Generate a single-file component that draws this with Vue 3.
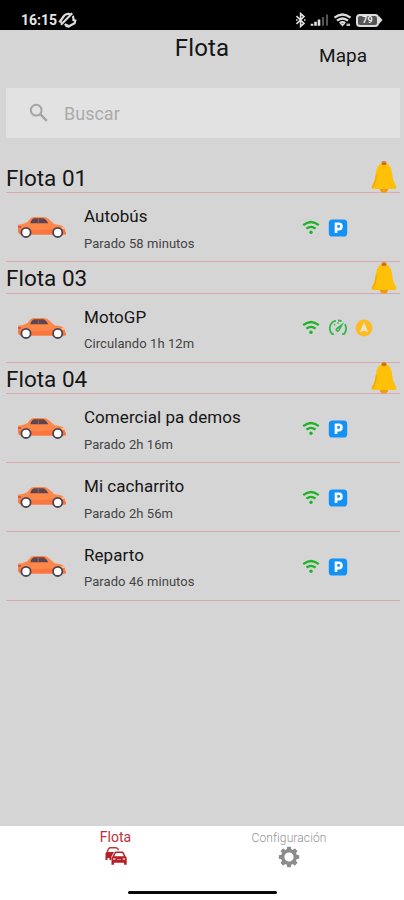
<script setup>
const groups = [
  { name: 'Flota 01', items: [{ name: 'Autobús', status: 'Parado 58 minutos', moving: false }] },
  { name: 'Flota 03', items: [{ name: 'MotoGP', status: 'Circulando 1h 12m', moving: true }] },
  {
    name: 'Flota 04',
    items: [
      { name: 'Comercial pa demos', status: 'Parado 2h 16m', moving: false },
      { name: 'Mi cacharrito', status: 'Parado 2h 56m', moving: false },
      { name: 'Reparto', status: 'Parado 46 minutos', moving: false },
    ],
  },
]
</script>

<template>
  <div class="screen">
    <div class="status">
      <span class="clock">16:15</span>
      <svg class="mute" width="19" height="16" viewBox="0 0 19 16">
        <path d="M2 9.5 6.2 3.5Q9.5 .8 13.2 2.6Q16 4.3 15.4 8L17.3 8.6 16.6 11.2 11 14.2 5.5 11.6Z" fill="none" stroke="#ddd" stroke-width="2.2" />
        <path d="M7.5 13.8 11.5 14.6" stroke="#ddd" stroke-width="2.4" />
        <path d="M3 13.6 14.5 2" stroke="#000" stroke-width="3" />
        <path d="M3 12.8 14.2 1.2" stroke="#ddd" stroke-width="2" />
      </svg>
      <div class="indicators">
        <svg width="12" height="16" viewBox="0 0 12 16"><path d="M1.5 4.2 9 11.4 5.6 14.4V1.6L9 4.6 1.5 11.8M1 8h1.5M9 8h1.5" fill="none" stroke="#e2e2e2" stroke-width="1.6" /></svg>
        <svg width="20" height="16" viewBox="0 0 20 16">
          <path d="M2 13.8v-2M5.5 13.8v-4M9 13.8V7.5" stroke="#e2e2e2" stroke-width="2.6" />
          <path d="M13 13.8V5M17 13.8V2.5" stroke="#555" stroke-width="2" />
        </svg>
        <svg width="20" height="16" viewBox="0 0 20 16">
          <path d="M1.5 5.6Q9.5-.8 17.5 5.6M4 8.6Q9.5 4.2 15 8.6M6.8 11.4Q9.5 9.2 12.2 11.4" fill="none" stroke="#ddd" stroke-width="2.4" />
          <path d="M7.3 12h4.4L9.5 14.6Z" fill="#ddd" />
          <path d="M13.5 12.8h3.6" stroke="#bbb" stroke-width="2.4" />
        </svg>
        <span class="battery">
          <span class="level">79</span>
          <svg width="4" height="8" viewBox="0 0 4 8"><path d="M0 0 3.5 4 0 8Z" fill="#ddd" /></svg>
        </span>
      </div>
    </div>

    <header class="top">
      <span></span>
      <h1>Flota</h1>
      <span class="map">Mapa</span>
    </header>

    <div class="search">
      <svg width="20" height="20" viewBox="0 0 20 20"><circle cx="7.2" cy="7.2" r="5.4" fill="none" stroke="#a4a4a4" stroke-width="2" /><path d="m11.2 11.2 6.6 6.6" stroke="#a4a4a4" stroke-width="2.4" /></svg>
      <span>Buscar</span>
    </div>

    <main class="list">
      <section v-for="group in groups" :key="group.name">
        <div class="group">
          <h2>{{ group.name }}</h2>
          <svg class="bell" width="26" height="34" viewBox="0 0 26 34">
            <circle cx="13" cy="3.8" r="2.7" fill="#d9822b" />
            <path d="M8.7 28.5h8.6a4.3 4.3 0 0 1-8.6 0Z" fill="#f29a12" />
            <path d="M13 3C17.2 3 20 6.2 20.8 11.5C21.8 19 22.6 22 25 25.4Q26.2 28 24.4 29H1.6Q-.2 28 1 25.4C3.4 22 4.2 19 5.2 11.5C6 6.2 8.8 3 13 3Z" fill="#ffc107" />
            <path d="M5.6 14C5 20 4 23.5 1.6 27.7" fill="none" stroke="#f5a80c" stroke-width="1.5" />
            <path d="M11.2 4.5Q13 2.5 14.8 4.5" fill="none" stroke="#c9651d" stroke-width="2" />
          </svg>
        </div>
        <div v-for="item in group.items" :key="item.name" class="row">
          <svg class="car" width="50" height="23" viewBox="0 0 50 23">
            <path d="M1 8.8Q10 8 12.6 3.5Q13.8 1 16.5 1H27Q30 1 32.3 3.5L37.5 8.3Q46 8.8 47.5 12V14.8L49 16.2V18.2Q47.5 19 43.5 18.8H5Q1.7 18.6 1 16.2Z" fill="#fd8748" />
            <path d="M1.2 13.5 20 14.2 47.8 12.4V15L49 16.2V18.3H4Q1.5 18 1.2 13.5Z" fill="#fa7640" />
            <path d="M13.2 7.2Q15 2.3 17.4 2.3H26Q28.5 2.3 31.3 7.2Z" fill="#5c4553" />
            <path d="M20.8 2.3h1.1v5h-1.1z" fill="#93604f" />
            <path d="M1 10h3v2H1z" fill="#d9534a" />
            <path d="M44.5 11h3.3v2h-3.3z" fill="#ffc08d" />
            <g fill="#fff" stroke="#4a4555" stroke-width="1.8">
              <circle cx="9" cy="16.4" r="4.6" />
              <circle cx="40.7" cy="16.4" r="4.6" />
            </g>
          </svg>
          <div class="info">
            <span class="name">{{ item.name }}</span>
            <span class="sub">{{ item.status }}</span>
          </div>
          <div class="badges">
            <svg width="18" height="18" viewBox="0 0 18 18">
              <path d="M1.2 6.2Q9-.2 16.8 6.2M4.4 9.7Q9 6 13.6 9.7" fill="none" stroke="#1fb428" stroke-width="2.3" />
              <circle cx="9" cy="13.3" r="1.7" fill="#1fb428" />
            </svg>
            <svg v-if="!item.moving" width="20" height="18" viewBox="0 0 20 18">
              <rect x=".8" y=".5" width="18.4" height="17" rx="3.6" fill="#1292f5" />
              <path d="M8 14V4.8h2.8a2.6 2.6 0 0 1 0 5.3H8" fill="none" stroke="#fff" stroke-width="2.6" />
            </svg>
            <template v-else>
              <svg width="20" height="18" viewBox="0 0 20 18">
                <path d="M6 15.2H4.2Q1.6 12.8 1.8 9Q2.5 2.8 8 1.7M10 1.5Q12 1.5 13.6 2.3M16.9 5.2Q19.8 10.5 16 15.2H14" fill="none" stroke="#34b848" stroke-width="1.8" />
                <path d="M6 5l1.2 1.3M10 3v2" stroke="#34b848" stroke-width="1.1" />
                <path d="M16.2 3.2 11.7 11.5A2.2 2.2 0 1 1 8.5 8.8Z" fill="#34b848" />
                <circle cx="10" cy="10.5" r=".8" fill="#d5d5d5" />
              </svg>
              <svg class="arrow" width="18" height="18" viewBox="0 0 18 18">
                <circle cx="9" cy="9" r="8.4" fill="#fdbc24" />
                <path d="M9 3.2 13.2 13.2 9 11.4 4.8 13.2Z" fill="#eee5c8" />
              </svg>
            </template>
          </div>
        </div>
      </section>
    </main>

    <nav class="tabs">
      <div class="tab active">
        <span>Flota</span>
        <svg width="24" height="21" viewBox="0 0 24 21">
          <path d="M3 7Q4.2 2 6 1.7H12Q14 1.9 14.6 4.3" fill="none" stroke="#c5333a" stroke-width="1.5" />
          <path d="M1.5 7Q2.2 6 4 6H10L7.3 11V14H5.5V12H3.5V14H1.5Z" fill="#b51f28" />
          <path d="M8.2 11 10.2 7Q10.8 5.6 12.5 5.6H17.8Q19.5 5.6 20 7L21.7 10.5Q22.7 11.2 22.7 12.5V18.8H20V16.7H10V18.8H7.5V12.5Q7.5 11.4 8.2 11Z" fill="#b51f28" />
          <path d="M10.3 10.3 11.5 7.5Q12 7 13 7H17.5Q18.3 7 18.6 7.6L19.9 10.3Z" fill="#fff" />
          <path d="M9 13h2.5M18.7 13h2.5" stroke="#f3c5c7" stroke-width="1.5" />
          <path d="M13 13.5h4" stroke="#db7d82" />
        </svg>
      </div>
      <div class="tab config">
        <span>Configuración</span>
        <svg width="24" height="22" viewBox="-12 -11 24 22">
          <g fill="#8c8c8c">
            <rect v-for="n in 8" :key="n" x="-2.1" y="-10.2" width="4.2" height="5" rx=".8" :transform="`rotate(${n * 45})`" />
          </g>
          <circle r="6.3" fill="none" stroke="#8c8c8c" stroke-width="3.4" />
        </svg>
      </div>
      <div class="handle"></div>
    </nav>
  </div>
</template>

<style>
body {
  margin: 0;
  background: #d5d5d5;
}
</style>

<style scoped>
.screen {
  width: 404px;
  height: 900px;
  display: flex;
  flex-direction: column;
  background: #d5d5d5;
  color: #161616;
  font-family: Roboto, "Liberation Sans", sans-serif;
  overflow: hidden;
}
svg {
  display: block;
  flex: none;
}
.status {
  height: 30px;
  box-sizing: border-box;
  padding: 12px 21px 0 21px;
  display: flex;
  align-items: flex-start;
  background: #000;
  color: #e6e6e6;
}
.clock {
  font-size: 14px;
  line-height: 17px;
  font-weight: 700;
  width: 36px;
}
.mute {
  margin-left: 1px;
}
.indicators {
  margin-left: auto;
  display: flex;
  gap: 3px;
}
.battery {
  display: flex;
  align-items: center;
  height: 16px;
}
.level {
  box-sizing: border-box;
  width: 23px;
  height: 13px;
  border: 2px solid #ddd;
  border-radius: 4px;
  background: #555;
  color: #eee;
  font-size: 9px;
  font-weight: 700;
  line-height: 9px;
  text-align: center;
}
.top {
  height: 58px;
  display: grid;
  grid-template-columns: 1fr auto 1fr;
  box-sizing: border-box;
  padding-top: 4px;
}
h1,
h2 {
  margin: 0;
  font-weight: 400;
}
h1 {
  font-size: 24px;
  line-height: 29px;
  letter-spacing: 0.15px;
}
.map {
  justify-self: end;
  padding: 11px 37px 0 0;
  font-size: 19px;
  line-height: 22px;
}
.search {
  height: 50px;
  flex: none;
  margin: 0 4px 0 6px;
  box-sizing: border-box;
  padding-left: 23px;
  display: flex;
  align-items: center;
  gap: 15px;
  background: #e2e2e2;
  color: #ababab;
  font-size: 18px;
}
.list {
  flex: 1;
  padding: 23.8px 4px 0 6px;
}
.group {
  height: 31.6px;
  box-sizing: border-box;
  border-bottom: 1px solid #dbaaaf;
  display: flex;
  justify-content: space-between;
}
h2 {
  font-size: 22.5px;
  line-height: 32px;
}
.bell {
  margin: -1.6px 3px 0 0;
}
.row {
  height: 68.9px;
  box-sizing: border-box;
  border-bottom: 1px solid #dbaaaf;
  display: flex;
}
.car {
  margin: 23px 0 0 11px;
}
.info {
  display: flex;
  flex-direction: column;
  margin: 12.7px 0 0 17px;
  width: 218px;
}
.name {
  font-size: 17px;
  line-height: 20px;
  letter-spacing: 0.05px;
}
.sub {
  margin-top: 9.6px;
  font-size: 13px;
  line-height: 16px;
  letter-spacing: 0.07px;
  color: #444;
}
.badges {
  display: flex;
  gap: 8px;
  margin-top: 25.5px;
}
.arrow {
  margin-left: -1px;
}
.tabs {
  height: 74px;
  background: #fff;
  display: grid;
  grid-template-columns: 231px 116px;
  grid-template-rows: 65px 4px;
}
.tab {
  display: flex;
  flex-direction: column;
  align-items: center;
  padding-top: 3px;
  color: #929292;
  font-size: 12px;
  line-height: 17px;
}
.config span {
  font-weight: 300;
  letter-spacing: 0.12px;
  transform: translateY(1px);
}
.active {
  color: #bd3038;
  font-size: 14px;
}
.handle {
  grid-column: 1 / -1;
  width: 149px;
  height: 3px;
  margin-left: 128px;
  border-radius: 2px;
  background: #080808;
}
</style>
